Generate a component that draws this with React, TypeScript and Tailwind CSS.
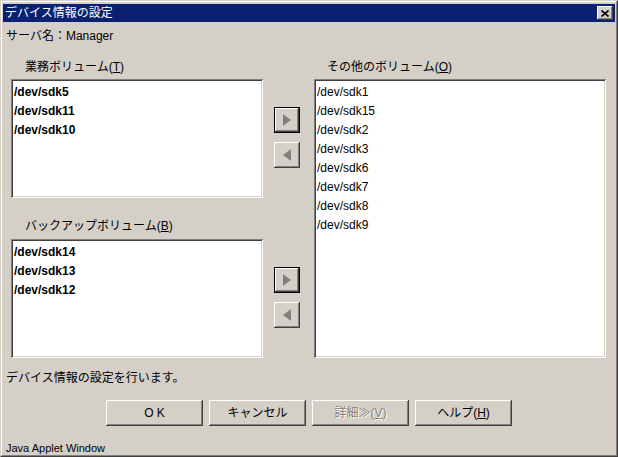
import * as React from "react"

const FONT = "font-['Liberation_Sans','Noto_Sans_CJK_JP',sans-serif]"

const RAISED =
  "shadow-[inset_-1px_-1px_#404040,inset_1px_1px_#ffffff,inset_-2px_-2px_#808080]"
const SUNKEN =
  "shadow-[inset_1px_1px_#808080,inset_-1px_-1px_#ffffff,inset_2px_2px_#404040,inset_-2px_-2px_#d4d0c8]"

const BUSINESS = ["/dev/sdk5", "/dev/sdk11", "/dev/sdk10"]
const BACKUP = ["/dev/sdk14", "/dev/sdk13", "/dev/sdk12"]
const OTHERS = [
  "/dev/sdk1",
  "/dev/sdk15",
  "/dev/sdk2",
  "/dev/sdk3",
  "/dev/sdk6",
  "/dev/sdk7",
  "/dev/sdk8",
  "/dev/sdk9",
]

function Mnemonic({ label, char }: { label: string; char: string }) {
  return (
    <span>
      {label}(<span className="underline">{char}</span>)
    </span>
  )
}

function VolumeList({
  items,
  bold,
  className,
}: {
  items: string[]
  bold?: boolean
  className: string
}) {
  return (
    <div className={`bg-white px-[2px] pt-[4px] ${SUNKEN} ${className}`}>
      {items.map((item) => (
        <div
          className={`h-[19px] pl-[1px] text-[12px] leading-[19px] text-black ${bold ? "font-bold" : ""}`}
          key={item}
        >
          {item}
        </div>
      ))}
    </div>
  )
}

function Arrow({ dir, focused }: { dir: "right" | "left"; focused?: boolean }) {
  return (
    <div
      className={`flex h-[26px] w-[26px] items-center justify-center bg-[#d4d0c8] ${
        focused
          ? "shadow-[inset_0_0_0_1px_#000000,inset_-2px_-2px_#404040,inset_2px_2px_#ffffff,inset_-3px_-3px_#808080]"
          : RAISED
      }`}
    >
      <svg height="12" viewBox="0 0 10 12" width="10">
        {dir === "right" ? (
          <polygon fill="#808080" points="1,0 9,6 1,12" />
        ) : (
          <polygon fill="#808080" points="9,0 1,6 9,12" />
        )}
      </svg>
    </div>
  )
}

function ArrowPair({ first }: { first?: boolean }) {
  return (
    <div className="ml-[11px] flex flex-col gap-[9px] pt-[28px]">
      <Arrow dir="right" focused={first} />
      <Arrow dir="left" />
    </div>
  )
}

function DialogButton({
  children,
  disabled,
}: {
  children: React.ReactNode
  disabled?: boolean
}) {
  return (
    <div
      className={`flex h-[26px] w-[97px] items-center justify-center bg-[#d4d0c8] text-[12px] ${RAISED} ${
        disabled ? "text-[#808080] [text-shadow:1px_1px_#ffffff]" : "text-black"
      }`}
    >
      {children}
    </div>
  )
}

export default function App() {
  return (
    <div className={`h-[457px] w-[618px] bg-[#d4d0c8] ${FONT}`}>
      <div className="h-full w-full border-t border-l border-r border-b border-t-[#d4d0c8] border-l-[#d4d0c8] border-r-[#404040] border-b-[#404040]">
        <div className="flex h-full w-full flex-col border-t border-l border-r border-b border-t-white border-l-white border-r-[#808080] border-b-[#808080] px-px pt-[2px]">
          <div className="flex h-[18px] items-center justify-between bg-[#0a2070] pr-[2px] pl-[2px]">
            <span className="text-[12px] leading-[18px] text-white">
              デバイス情報の設定
            </span>
            <div
              className={`flex h-[14px] w-[16px] items-center justify-center bg-[#d4d0c8] ${RAISED}`}
            >
              <svg height="7" viewBox="0 0 8 7" width="8">
                <path
                  d="M0.5 0.5 L7.5 6.5 M7.5 0.5 L0.5 6.5"
                  stroke="#000"
                  strokeWidth="1.6"
                />
              </svg>
            </div>
          </div>

          <div className="flex flex-1 flex-col pl-[3px]">
            <div className="mt-[7px] h-[14px] text-[12px] leading-[14px] text-black">
              サーバ名：Manager
            </div>

            <div className="mt-[14px] flex">
              <div className="ml-[5px] flex flex-col">
                <div className="h-[22px] pt-[2px] pl-[14px] text-[12px] leading-[16px] text-black">
                  <Mnemonic char="T" label="業務ボリューム" />
                </div>
                <div className="flex">
                  <VolumeList bold className="h-[119px] w-[252px]" items={BUSINESS} />
                  <ArrowPair first />
                </div>
                <div className="h-[41px] pt-[20px] pl-[14px] text-[12px] leading-[16px] text-black">
                  <Mnemonic char="B" label="バックアップボリューム" />
                </div>
                <div className="flex">
                  <VolumeList bold className="h-[119px] w-[252px]" items={BACKUP} />
                  <ArrowPair first />
                </div>
              </div>

              <div className="ml-[14px] flex flex-col">
                <div className="h-[22px] pt-[2px] pl-[13px] text-[12px] leading-[16px] text-black">
                  <Mnemonic char="O" label="その他のボリューム" />
                </div>
                <VolumeList className="h-[279px] w-[292px]" items={OTHERS} />
              </div>
            </div>

            <div className="mt-[13px] h-[14px] text-[12px] leading-[14px] text-black">
              デバイス情報の設定を行います。
            </div>

            <div className="mt-[15px] flex gap-[6px] pl-[100px]">
              <DialogButton>O K</DialogButton>
              <DialogButton>キャンセル</DialogButton>
              <DialogButton disabled>
                <span>
                  詳細≫(<span className="underline">V</span>)
                </span>
              </DialogButton>
              <DialogButton>
                <span>
                  ヘルプ(<span className="underline">H</span>)
                </span>
              </DialogButton>
            </div>

            <div className="mt-[16px] text-[11px] leading-[13px] text-black">
              Java Applet Window
            </div>
          </div>
        </div>
      </div>
    </div>
  )
}
